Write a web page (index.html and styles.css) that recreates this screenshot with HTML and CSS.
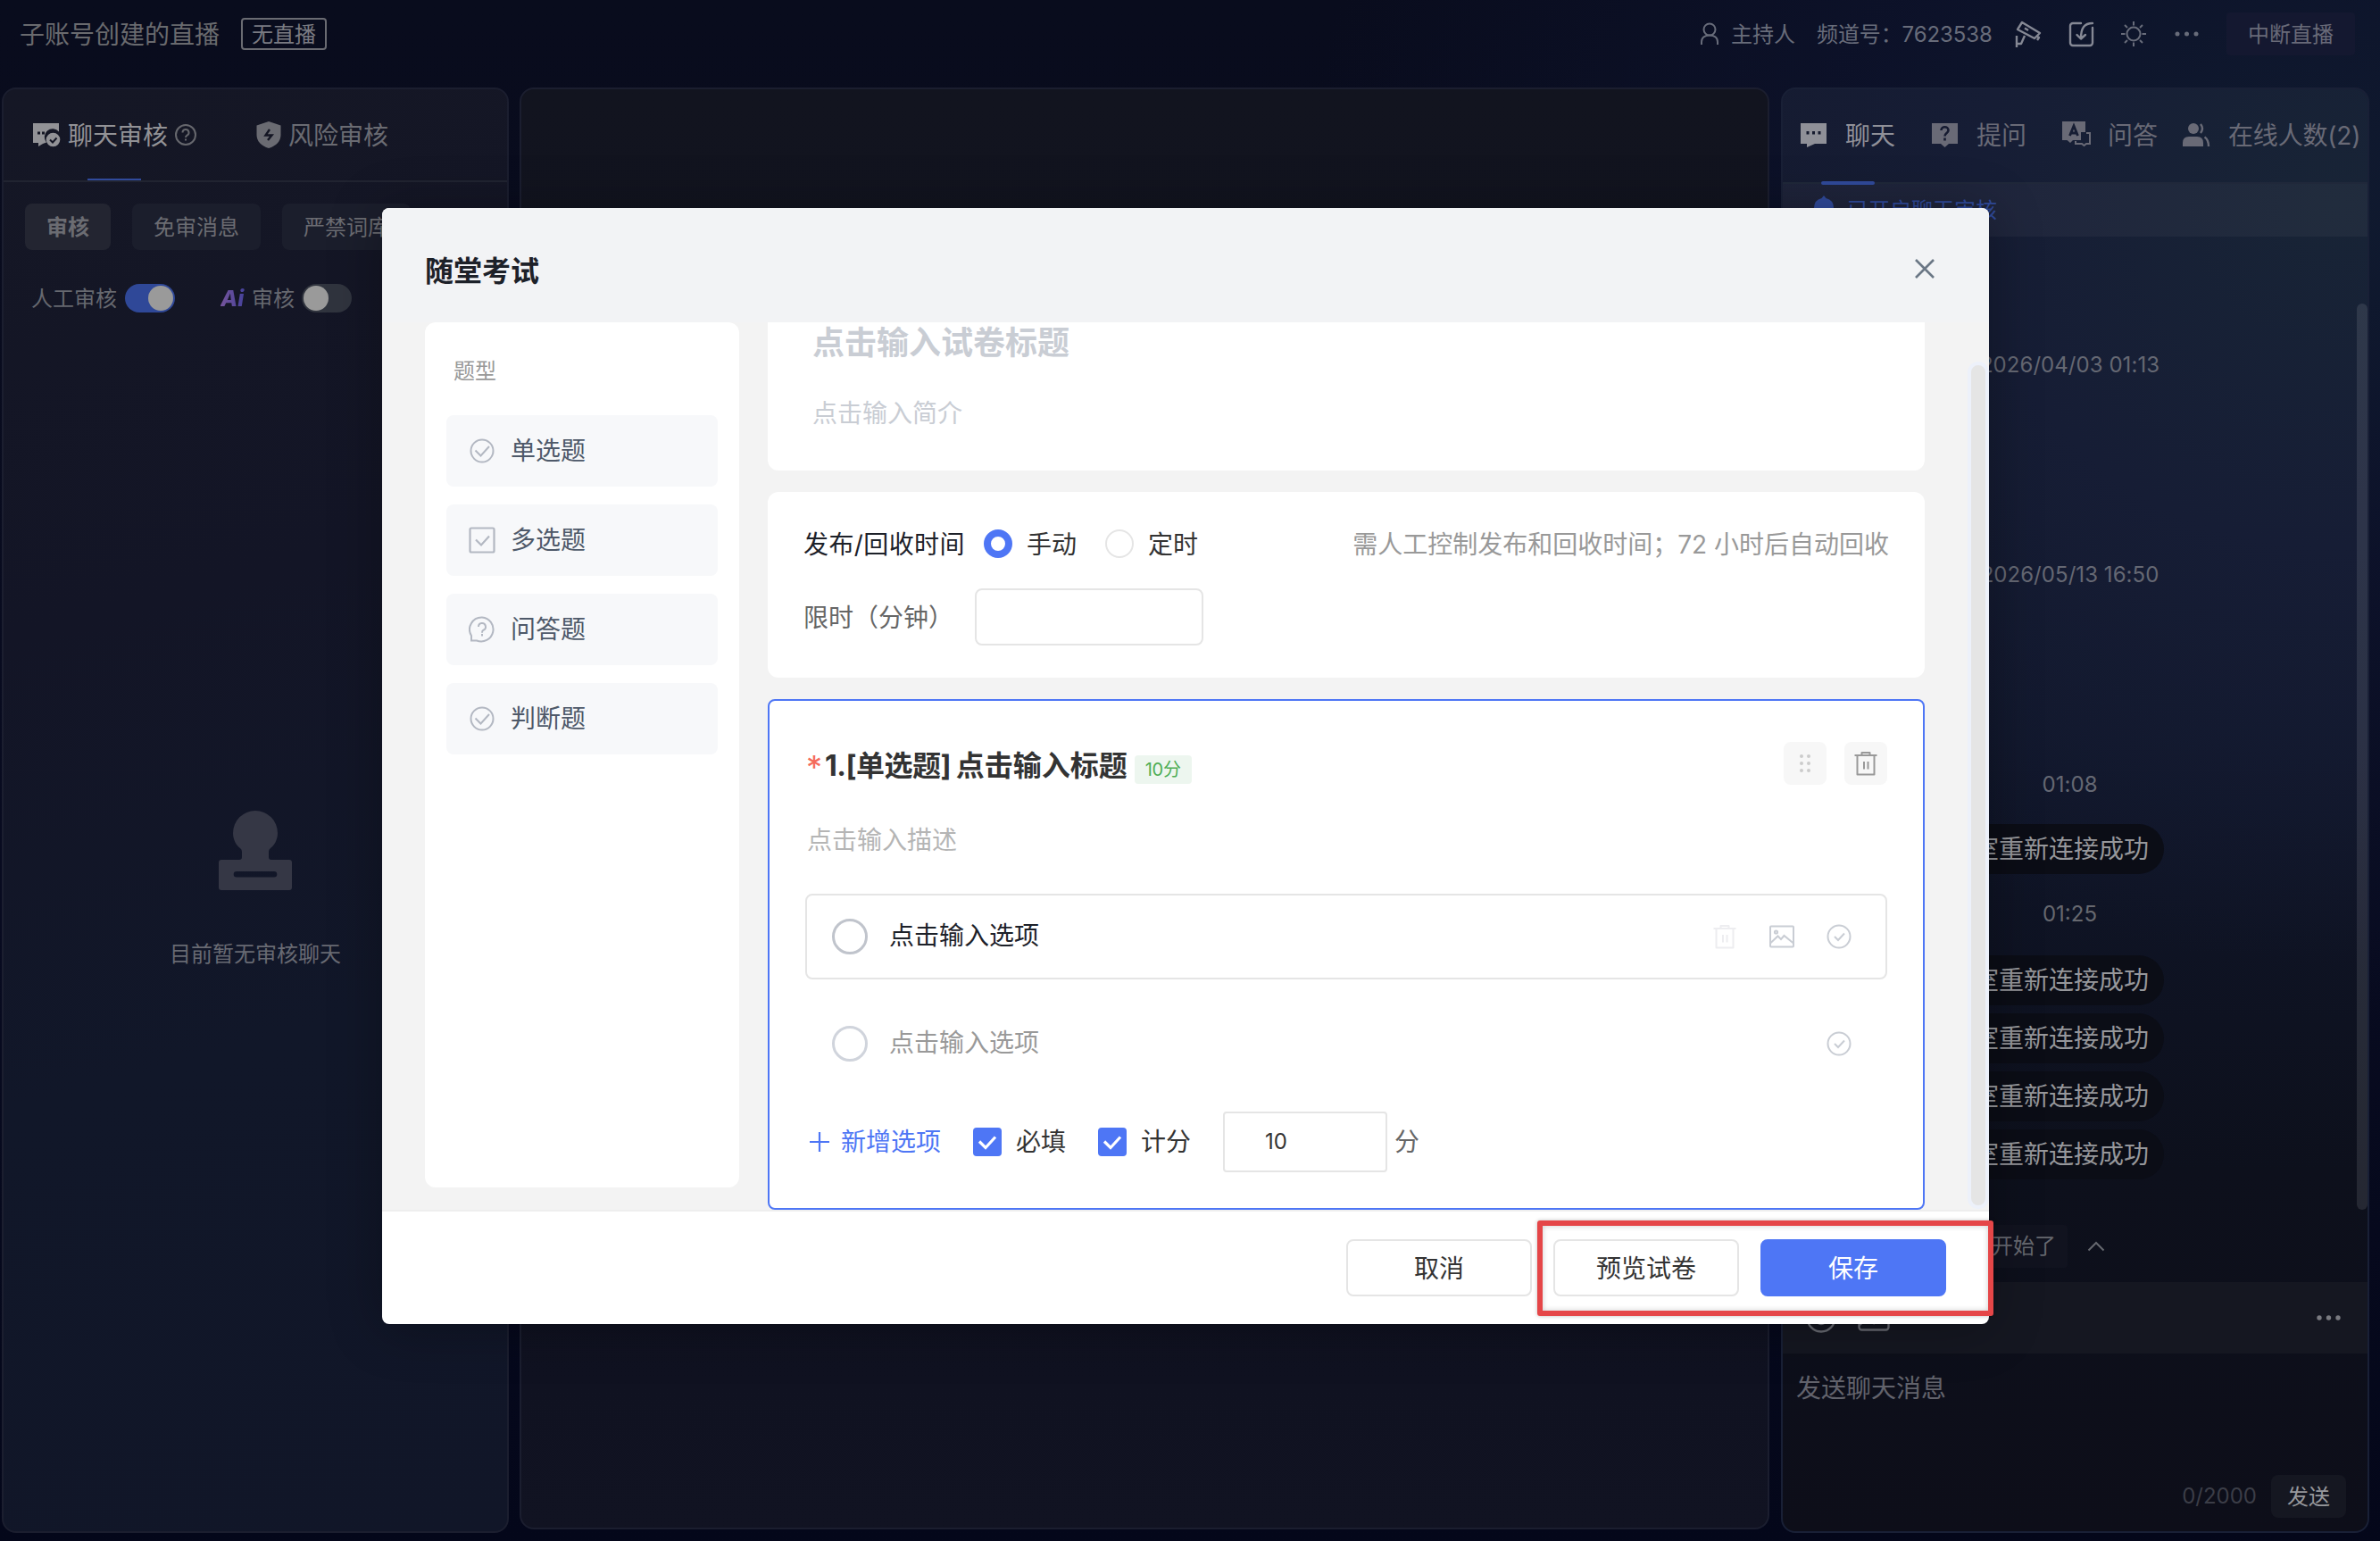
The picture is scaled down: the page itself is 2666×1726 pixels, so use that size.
FILE: index.html
```html
<!DOCTYPE html>
<html lang="zh-CN">

<head>
    <meta charset="UTF-8">
    <meta name="viewport" content="width=device-width, initial-scale=1.0">
    <title>随堂考试</title>
    <link rel="stylesheet" href="styles.css">
</head>

<body>
    <!-- shared icons -->
    <svg class="sprite" aria-hidden="true">
        <symbol id="i-check-circle" viewBox="0 0 28 28">
            <g fill="none" stroke="currentColor" stroke-width="2">
                <circle cx="14" cy="14" r="12.500" />
                <path d="M9 14l4 4 7-7.500" />
            </g>
        </symbol>
        <symbol id="i-trash" viewBox="0 0 28 28">
            <g fill="none" stroke="currentColor" stroke-width="2">
                <path d="M1.500 5h25M4.500 5v21.500h19V5M9.500 5V2h9v3M12 12v8.500M16.500 12v8.500" stroke-linejoin="round" />
            </g>
        </symbol>
        <symbol id="i-tick" viewBox="0 0 32 32">
            <path d="M7 15.500l7 7 11-12" fill="none" stroke="#fff" stroke-width="3.200" />
        </symbol>
    </svg>

    <header class="header">
        <h1 class="channel-name">子账号创建的直播</h1>
        <span class="live-status">无直播</span>
        <div class="header-right">
            <svg class="icon-user" width="22" height="26" viewBox="0 0 22 26" fill="none" stroke="currentColor" stroke-width="2">
                <circle cx="11" cy="8" r="6.500" />
                <path d="M2 25v-3c0-5 4-7.500 9-7.500s9 2.500 9 7.500v3" />
            </svg>
            <span class="role">主持人</span>
            <span class="channel-id">频道号：7623538</span>
            <svg class="icon-camera" width="32" height="32" viewBox="0 0 32 32" fill="none" stroke="currentColor" stroke-width="2.400" stroke-linejoin="round">
                <path d="M9 3l20 12-6 6L4 11zM12 9.500l4 2.500M25 18l3 2-2 3M3 18v13M3 27h5l4-9" />
            </svg>
            <svg class="icon-sign" width="30" height="30" viewBox="0 0 30 30" fill="none" stroke="currentColor" stroke-width="2.400" stroke-linecap="round" stroke-linejoin="round">
                <path d="M15 3H6a3 3 0 0 0-3 3v19a3 3 0 0 0 3 3h19a3 3 0 0 0 3-3V8M28 3c-9 0-13 5-13 17M10.500 16l4.500 4.500 5-4.500" />
            </svg>
            <svg class="icon-sun" width="30" height="30" viewBox="0 0 30 30" fill="none" stroke="currentColor" stroke-width="2">
                <circle cx="15" cy="15" r="7.500" />
                <path d="M15 1v4.500M15 24.500V29M1 15h4.500M24.500 15H29M5 5l3 3M22 22l3 3M25 5l-3 3M8 22l-3 3" />
            </svg>
            <svg class="icon-more" width="28" height="6" viewBox="0 0 28 6" fill="currentColor">
                <circle cx="3" cy="3" r="2.500" />
                <circle cx="13.500" cy="3" r="2.500" />
                <circle cx="24" cy="3" r="2.500" />
            </svg>
            <button class="btn-stop">中断直播</button>
        </div>
    </header>

    <main class="main">
        <!-- chat review -->
        <section class="panel audit-panel">
            <div class="audit-tabs">
                <div class="audit-tab active">
                    <svg width="32" height="28" viewBox="0 0 32 28">
                        <path fill="currentColor" d="M1 1h29v9.500a9 9 0 0 0-14 12L12 24l-5 3v-4H1z" />
                        <g fill="#141624">
                            <path d="M6 10.500h3v3H6zM11 10.500h3v3h-3zM16 10.500h2v2h-2z" />
                        </g>
                        <circle cx="23.500" cy="19.500" r="7.800" fill="currentColor" />
                        <path d="M20 19.500l3 3 4.500-5" fill="none" stroke="#141624" stroke-width="2" />
                    </svg>
                    <span>聊天审核</span>
                    <svg class="help" width="24" height="24" viewBox="0 0 24 24" fill="none" stroke="currentColor" stroke-width="2">
                        <circle cx="12" cy="12" r="11" />
                        <path d="M8.500 9.500a3.500 3.500 0 1 1 5 3.100c-1 .6-1.500 1-1.500 2.400M12 16.500v2" />
                    </svg>
                </div>
                <div class="audit-tab">
                    <svg width="28" height="30" viewBox="0 0 28 30">
                        <path fill="currentColor" d="M14 0l13.500 4.500V15c0 7-5 12.500-13.500 15C5.500 27.500.5 22 .5 15V4.500z" />
                        <path d="M15 9l-4.500 6.500h7L13 21" fill="none" stroke="#141624" stroke-width="2.400" />
                    </svg>
                    <span>风险审核</span>
                </div>
            </div>
            <div class="audit-filters">
                <button class="filter active">审核</button>
                <button class="filter">免审消息</button>
                <button class="filter">严禁词库</button>
            </div>
            <div class="audit-switches">
                <span>人工审核</span>
                <i class="switch on"></i>
                <em class="ai-logo">Ai</em>
                <span>审核</span>
                <i class="switch"></i>
            </div>
            <div class="audit-empty">
                <svg width="82" height="89" viewBox="0 0 82 89" fill="currentColor">
                    <path fill-rule="evenodd" d="M41 0a25 25 0 0 1 25 25c0 8-4 14-8 17q-2 1.500-2 4v6q0 3 3 3h20q3 0 3 3v28q0 3-3 3H3q-3 0-3-3V58q0-3 3-3h20q3 0 3-3v-6q0-2.500-2-4c-4-3-8-9-8-17A25 25 0 0 1 41 0zM20 68a3.300 3.300 0 0 0 0 6.600h42a3.300 3.300 0 0 0 0-6.600z" />
                </svg>
                <p>目前暂无审核聊天</p>
            </div>
        </section>

        <section class="panel stage-panel"></section>

        <!-- chat room -->
        <section class="panel chat-panel">
            <div class="chat-tabs">
                <div class="chat-tab active">
                    <svg width="32" height="30" viewBox="0 0 32 30">
                        <path fill="currentColor" d="M1 3h29v23H17l-9 4v-4H1z" />
                        <path fill="#151a2e" d="M7.500 12h3v3.500h-3zM14 12h3v3.500h-3zM20.500 12h3v3.500h-3z" />
                    </svg>
                    <span>聊天</span>
                </div>
                <div class="chat-tab">
                    <svg width="32" height="30" viewBox="0 0 32 30">
                        <path fill="currentColor" d="M1 3h29v23H20l-4.500 4-4.500-4H1z" />
                        <path d="M11.500 11c0-5 8-5 8 0 0 3-4 3-4 6.500M15.500 19.500v3" fill="none" stroke="#161b31" stroke-width="2.600" />
                    </svg>
                    <span>提问</span>
                </div>
                <div class="chat-tab">
                    <svg width="32" height="30" viewBox="0 0 32 30">
                        <path fill="currentColor" d="M0 1h26v12h-5v9h-9l-3 3-3.500-3H0z" />
                        <path d="M8.500 17l4.500-11 4.500 11M10.500 14h5" fill="none" stroke="#161d33" stroke-width="2.800" />
                        <path d="M27 14h4v12h-4l-2.500 2-2.500-2h-7v-3" fill="none" stroke="currentColor" stroke-width="2" />
                    </svg>
                    <span>问答</span>
                </div>
                <div class="chat-tab">
                    <svg width="32" height="30" viewBox="0 0 32 30" fill="currentColor">
                        <circle cx="12" cy="9" r="6" />
                        <path d="M0 29v-4q0-7 7-7h9q7 0 7 7v4z" />
                        <path d="M20 4q4 5 0 10M24.500 18.500q4.500 3 4.500 10.500" fill="none" stroke="currentColor" stroke-width="2.400" />
                    </svg>
                    <span>在线人数(2)</span>
                </div>
            </div>
            <div class="chat-notice">
                <svg width="24" height="30" viewBox="0 0 24 30" fill="currentColor">
                    <path d="M12 0l2.500 3Q23 5 23 14v9l1 2H0l1-2v-9Q1 5 9.500 3z" />
                </svg>
                <span>已开启聊天审核</span>
            </div>
            <div class="chat-body">
                <div class="chat-list">
                    <time class="chat-date">2026/04/03 01:13</time>
                    <time class="chat-date">2026/05/13 16:50</time>
                    <time class="chat-date">01:08</time>
                    <p class="chat-tip first">聊天室重新连接成功</p>
                    <time class="chat-time">01:25</time>
                    <p class="chat-tip second">聊天室重新连接成功</p>
                    <p class="chat-tip">聊天室重新连接成功</p>
                    <p class="chat-tip">聊天室重新连接成功</p>
                    <p class="chat-tip">聊天室重新连接成功</p>
                </div>
                <div class="chat-scrollbar"></div>
            </div>
            <div class="quick-reply">
                <span class="quick-tag">直播开始了</span>
                <svg width="20" height="12" viewBox="0 0 20 12" fill="none" stroke="currentColor" stroke-width="2">
                    <path d="M1.500 10.500L10 2l8.500 8.500" />
                </svg>
            </div>
            <div class="chat-toolbar">
                <svg width="34" height="34" viewBox="0 0 34 34" fill="none" stroke="currentColor" stroke-width="2.400">
                    <circle cx="17" cy="17" r="15.500" />
                    <path d="M9 19q8 10 16 0" />
                </svg>
                <svg width="36" height="30" viewBox="0 0 36 30" fill="none" stroke="currentColor" stroke-width="2.400">
                    <rect x="1.500" y="1.500" width="33" height="27" rx="3" />
                    <path d="M2 23l9-8 7 6 7-9 9 9" />
                </svg>
                <svg class="more" width="28" height="6" viewBox="0 0 28 6" fill="currentColor">
                    <circle cx="3" cy="3" r="2.700" />
                    <circle cx="13.500" cy="3" r="2.700" />
                    <circle cx="24" cy="3" r="2.700" />
                </svg>
            </div>
            <div class="chat-input">
                <p class="chat-placeholder">发送聊天消息</p>
                <div class="chat-send">
                    <span class="count">0/2000</span>
                    <button class="btn-send">发送</button>
                </div>
            </div>
        </section>
    </main>

    <!-- exam dialog -->
    <div class="dialog">
        <div class="dialog-header">
            <h2>随堂考试</h2>
            <svg width="24" height="24" viewBox="0 0 24 24" fill="none" stroke="#6b7785" stroke-width="2.600">
                <path d="M2 2l20 20M22 2L2 22" />
            </svg>
        </div>
        <div class="dialog-body">
            <aside class="types">
                <p class="types-title">题型</p>
                <div class="type-item">
                    <svg width="30" height="30" viewBox="0 0 30 30" fill="none" stroke="currentColor" stroke-width="2">
                        <circle cx="15" cy="15" r="12.500" />
                        <path d="M7.500 14.500l6 6 9.500-10.500" />
                    </svg>
                    <span>单选题</span>
                </div>
                <div class="type-item">
                    <svg width="30" height="30" viewBox="0 0 30 30" fill="none" stroke="currentColor" stroke-width="2.200">
                        <rect x="1.500" y="1.500" width="27" height="27" rx="1.500" />
                        <path d="M8 14.500l6 6 9-10" />
                    </svg>
                    <span>多选题</span>
                </div>
                <div class="type-item">
                    <svg width="30" height="30" viewBox="0 0 30 30" fill="none" stroke="currentColor" stroke-width="2">
                        <path d="M15 1.500A13.500 13.500 0 1 1 9 27.500H3V22A13.500 13.500 0 0 1 15 1.500z" />
                        <path d="M11 12a4 4 0 1 1 5.500 3.700q-1.500.8-1.500 3M15 20v2.500" />
                    </svg>
                    <span>问答题</span>
                </div>
                <div class="type-item">
                    <svg width="30" height="30" viewBox="0 0 30 30" fill="none" stroke="currentColor" stroke-width="2">
                        <circle cx="15" cy="15" r="12.500" />
                        <path d="M7.500 14.500l6 6 9.500-10.500" />
                    </svg>
                    <span>判断题</span>
                </div>
            </aside>

            <div class="paper">
                <div class="card paper-head">
                    <p class="paper-title">点击输入试卷标题</p>
                    <p class="paper-intro">点击输入简介</p>
                </div>

                <div class="card paper-setting">
                    <div class="setting-row">
                        <span class="label">发布/回收时间</span>
                        <i class="radio checked"></i>
                        <span class="radio-text">手动</span>
                        <i class="radio"></i>
                        <span class="radio-text">定时</span>
                        <span class="hint">需人工控制发布和回收时间；72 小时后自动回收</span>
                    </div>
                    <div class="setting-row limit">
                        <span class="limit-label">限时（分钟）</span>
                        <div class="limit-input"></div>
                    </div>
                </div>

                <div class="card question">
                    <div class="question-head">
                        <span class="star">*</span>
                        <h3><span class="no">1.[单选题]</span> 点击输入标题</h3>
                        <span class="score-tag">10分</span>
                        <div class="question-tools">
                            <span class="tool drag">
                                <svg width="14" height="22" viewBox="0 0 14 22" fill="currentColor">
                                    <circle cx="3" cy="3" r="2" />
                                    <circle cx="11" cy="3" r="2" />
                                    <circle cx="3" cy="11" r="2" />
                                    <circle cx="11" cy="11" r="2" />
                                    <circle cx="3" cy="19" r="2" />
                                    <circle cx="11" cy="19" r="2" />
                                </svg>
                            </span>
                            <span class="tool"><svg width="28" height="28"><use href="#i-trash" /></svg></span>
                        </div>
                    </div>
                    <p class="question-desc">点击输入描述</p>
                    <div class="option current">
                        <i class="option-radio"></i>
                        <span>点击输入选项</span>
                        <div class="option-tools">
                            <svg class="disabled" width="28" height="28"><use href="#i-trash" /></svg>
                            <svg width="28" height="28" viewBox="0 0 28 28" fill="none" stroke="currentColor" stroke-width="2">
                                <rect x="1" y="2.500" width="26" height="23" rx="1" />
                                <circle cx="7.500" cy="9" r="1.600" />
                                <path d="M1 21.500l8.500-8 3.500 3.500 3.500-4L27 21.500" />
                            </svg>
                            <svg width="28" height="28"><use href="#i-check-circle" /></svg>
                        </div>
                    </div>
                    <div class="option">
                        <i class="option-radio"></i>
                        <span>点击输入选项</span>
                        <div class="option-tools">
                            <svg width="28" height="28"><use href="#i-check-circle" /></svg>
                        </div>
                    </div>
                    <div class="question-foot">
                        <svg class="plus" width="22" height="22" viewBox="0 0 22 22" fill="none" stroke="currentColor" stroke-width="2.200">
                            <path d="M11 0v22M0 11h22" />
                        </svg>
                        <span class="add">新增选项</span>
                        <i class="checkbox"><svg width="32" height="32"><use href="#i-tick" /></svg></i>
                        <span class="check-text">必填</span>
                        <i class="checkbox"><svg width="32" height="32"><use href="#i-tick" /></svg></i>
                        <span class="check-text">计分</span>
                        <div class="score-input">10</div>
                        <span class="unit">分</span>
                    </div>
                </div>
            </div>
            <div class="paper-scrollbar"></div>
        </div>
        <div class="dialog-footer">
            <button class="btn">取消</button>
            <button class="btn">预览试卷</button>
            <button class="btn primary">保存</button>
        </div>
        <div class="mark"></div>
    </div>
</body>

</html>
```

FILE: styles.css
```css
/* General */
* {
    box-sizing: border-box;
}

body {
    margin: 0;
    width: 2666px;
    height: 1726px;
    overflow: hidden;
    position: relative;
    font-family: Inter, "Noto Sans CJK SC", sans-serif;
    font-size: 24px;
    line-height: 1.4;
    color: #66686f;
    background:
        radial-gradient(ellipse 1100px 900px at 2560px 240px, #101b30 0%, rgba(14, 20, 46, 0.7) 45%, rgba(9, 11, 28, 0) 100%),
        linear-gradient(#090c1d 0%, #080b20 60%, #04071a 100%);
}

h1, h2, h3, p {
    margin: 0;
    font-weight: 400;
}

button {
    font-family: inherit;
    padding: 0;
    border: none;
}

svg {
    display: block;
    flex-shrink: 0;
}

span {
    white-space: nowrap;
}

.sprite {
    position: absolute;
    width: 0;
    height: 0;
}

/* Header */
.header {
    display: flex;
    align-items: center;
    height: 98px;
    padding: 0 28px 22px 22px;
}

.channel-name {
    padding-top: 3px;
    font-size: 28px;
    color: #696a6e;
}

.live-status {
    margin-left: 24px;
    width: 96px;
    height: 36px;
    border: 2px solid #6a6b72;
    border-radius: 4px;
    line-height: 33px;
    text-align: center;
    color: #7a7b82;
}

.header-right {
    display: flex;
    align-items: center;
    margin-left: auto;
    color: #686c7a;
}

.icon-user {
    margin-right: 1px;
}

.role {
    margin-left: 12px;
    padding-top: 2px;
}

.channel-id {
    margin-left: 24px;
    padding-top: 2px;
    width: 196px;
    letter-spacing: -0.1px;
}

.icon-camera {
    margin-left: 25px;
    color: #858894;
}

.icon-sign {
    margin-left: 28px;
    color: #858894;
}

.icon-sun {
    margin-left: 29px;
}

.icon-more {
    margin-left: 31px;
}

.btn-stop {
    margin-left: 30px;
    width: 144px;
    height: 48px;
    padding-bottom: 4px;
    border-radius: 4px;
    font-size: 24px;
    color: #686a78;
    background: #141830;
}

/* Panels */
.main {
    display: flex;
    padding-left: 2px;
}

.panel {
    height: 1619px;
    border: 2px solid #1b1e2f;
    border-radius: 16px;
}

.audit-panel {
    width: 568px;
    background: linear-gradient(165deg, #151725 0%, #131526 35%, #111729 65%, #111628 100%);
}

.stage-panel {
    width: 1400px;
    height: 1615px;
    margin-left: 12px;
    background: linear-gradient(#12141f, #0f1120 80%, #111322);
}

.chat-panel {
    display: flex;
    flex-direction: column;
    width: 659px;
    margin-left: 13px;
    overflow: hidden;
    border-color: #192036;
    background:
        radial-gradient(ellipse 900px 850px at 620px 130px, #182436 0%, #161d35 45%, rgba(15, 20, 36, 0) 100%),
        linear-gradient(#151a2e 0%, #10162a 45%, #0d101c 75%, #0d0e19 100%);
}

/* Chat review panel */
.audit-tabs {
    display: flex;
    height: 104px;
    padding-left: 32px;
    border-bottom: 2px solid #212431;
    font-size: 28px;
}

.audit-tab {
    position: relative;
    display: flex;
    align-items: center;
    margin-right: 66px;
    color: #6a6b72;
}

.audit-tab span {
    margin-left: 8px;
    padding-top: 4px;
}

.audit-tab.active {
    margin-right: 67px;
    color: #929296;
}

.audit-tab.active::after {
    content: "";
    position: absolute;
    left: 62px;
    bottom: 0;
    width: 60px;
    height: 2px;
    background: #304a9b;
}

.audit-tab .help {
    margin-left: 8px;
    color: #66676d;
}

.audit-filters {
    display: flex;
    gap: 24px;
    padding: 24px 0 0 24px;
}

.filter {
    height: 52px;
    padding: 0 24px 4px;
    border-radius: 8px;
    font-size: 24px;
    color: #6b6c72;
    background: #1b1e2c;
}

.filter.active {
    font-weight: 700;
    background: #232531;
}

.audit-switches {
    display: flex;
    align-items: center;
    height: 32px;
    margin: 38px 0 0 31px;
}

.audit-switches span {
    padding-top: 2px;
}

.switch {
    display: flex;
    width: 56px;
    height: 32px;
    margin-left: 8px;
    padding: 2px;
    border-radius: 16px;
    background: #30343e;
}

.switch::before {
    content: "";
    width: 28px;
    height: 28px;
    border-radius: 50%;
    background: #9a9a9a;
}

.switch.on {
    margin-left: 9px;
    justify-content: flex-end;
    background: #2f4898;
}

.ai-logo {
    margin: 0 8px 0 51px;
    width: 27px;
    font-size: 25px;
    line-height: 32px;
    font-weight: 800;
    color: transparent;
    background: linear-gradient(90deg, #75549b, #45419b);
    -webkit-background-clip: text;
    background-clip: text;
}

.audit-empty {
    display: flex;
    flex-direction: column;
    align-items: center;
    margin-top: 558px;
    color: #353745;
}

.audit-empty p {
    margin-top: 55px;
    color: #686a73;
}

/* Chat room panel */
.chat-tabs {
    display: flex;
    flex-shrink: 0;
    height: 106px;
    padding-left: 19px;
    border-bottom: 2px solid #20283a;
    font-size: 28px;
    color: #696a76;
}

.chat-tab {
    position: relative;
    display: flex;
    align-items: center;
    gap: 19px;
    margin-right: 40px;
}

.chat-tab svg {
    margin-bottom: 5px;
}

.chat-tab span {
    padding-top: 1px;
}

.chat-tab:nth-child(3) {
    margin-right: 28px;
}

.chat-tab:last-child {
    margin-right: 0;
    letter-spacing: -0.2px;
}

.chat-tab.active {
    color: #8f9098;
}

.chat-tab.active::after {
    content: "";
    position: absolute;
    left: 24px;
    bottom: -3px;
    width: 60px;
    height: 4px;
    border-radius: 2px;
    background: #304a9b;
}

.chat-notice {
    display: flex;
    flex-shrink: 0;
    align-items: center;
    gap: 14px;
    height: 59px;
    padding-left: 34px;
    color: #304a9b;
    background: rgba(255, 255, 255, 0.04);
}

.chat-notice svg {
    margin-bottom: 3px;
}

.chat-body {
    display: flex;
    height: 1107px;
    flex-shrink: 0;
}

.chat-list {
    display: flex;
    flex: 1;
    flex-direction: column;
    align-items: center;
    padding-top: 128px;
}

.chat-date {
    height: 32px;
    line-height: 32px;
    margin-bottom: 203px;
    letter-spacing: 0.05px;
    color: #656873;
}

.chat-time {
    height: 32px;
    line-height: 32px;
    margin: 29px 0 30px;
}

.chat-tip {
    align-self: flex-end;
    height: 56px;
    margin: 9px 216px 0 0;
    padding: 0 17px;
    border-radius: 28px;
    font-size: 28px;
    line-height: 56px;
    color: #96979b;
    background: #0b0d16;
}

.chat-tip.first {
    margin-top: -175px;
}

.chat-tip.second {
    margin-top: 0;
}

.chat-scrollbar {
    width: 12px;
    height: 1015px;
    margin-top: 75px;
    border-radius: 6px;
    background: rgba(255, 255, 255, 0.1);
}

.quick-reply {
    display: flex;
    flex-shrink: 0;
    align-items: center;
    height: 48px;
    padding-left: 170px;
}

.quick-tag {
    width: 149px;
    height: 48px;
    margin-right: 22px;
    border-radius: 4px;
    padding-left: 3px;
    line-height: 48px;
    text-align: center;
    background: #11131f;
}

.chat-toolbar {
    display: flex;
    flex-shrink: 0;
    align-items: center;
    gap: 24px;
    height: 80px;
    margin-top: 16px;
    padding: 0 29px 0 26px;
    color: #686a72;
    background: #151721;
}

.chat-toolbar .more {
    margin-left: auto;
    color: #797a80;
}

.chat-input {
    display: flex;
    flex: 1;
    flex-direction: column;
    justify-content: space-between;
    padding: 20px 24px 15px 15px;
}

.chat-placeholder {
    font-size: 28px;
    color: #62636c;
}

.chat-send {
    display: flex;
    align-items: center;
    justify-content: flex-end;
}

.count {
    margin-right: 16px;
    color: #3b3d47;
}

.btn-send {
    width: 84px;
    height: 48px;
    padding-bottom: 4px;
    border-radius: 8px;
    font-size: 24px;
    color: #97989c;
    background: #151721;
}

/* Dialog */
.dialog {
    position: absolute;
    left: 428px;
    top: 233px;
    display: flex;
    flex-direction: column;
    width: 1800px;
    height: 1250px;
    border-radius: 8px;
    background: #fff;
    box-shadow: 0 4px 60px rgba(0, 0, 0, 0.3);
}

.dialog-header {
    display: flex;
    align-items: center;
    justify-content: space-between;
    height: 128px;
    padding: 15px 60px 0 48px;
    border-radius: 8px 8px 0 0;
    background: #f2f3f5;
}

.dialog-header h2 {
    font-size: 32px;
    font-weight: 700;
    color: #1d2129;
}

.dialog-header svg {
    margin-bottom: 7px;
}

.dialog-body {
    display: flex;
    height: 996px;
    padding-left: 48px;
    border-bottom: 2px solid #eee;
    background: #f3f3f3;
}

.types {
    width: 352px;
    height: 969px;
    padding: 38px 24px 0;
    border-radius: 12px;
    background: #fff;
}

.types-title {
    height: 66px;
    padding-left: 8px;
    color: #999;
}

.type-item {
    display: flex;
    align-items: center;
    gap: 17px;
    height: 80px;
    margin-bottom: 20px;
    padding-left: 25px;
    border-radius: 8px;
    font-size: 28px;
    color: #4e5969;
    background: #f7f8fa;
}

.type-item span {
    padding-top: 1px;
}

.type-item svg {
    color: #b3b8c2;
}

.paper {
    width: 1296px;
    margin-left: 32px;
}

.card {
    margin-bottom: 24px;
    border-radius: 12px;
    background: #fff;
}

.paper-head {
    height: 166px;
    padding: 1px 0 0 50px;
    border-radius: 0 0 12px 12px;
    color: #c9cdd4;
}

.paper-title {
    font-size: 36px;
    line-height: 44px;
    font-weight: 700;
}

.paper-intro {
    padding-top: 37px;
    font-size: 28px;
    line-height: 40px;
}

.paper-setting {
    height: 208px;
    padding: 34px 40px 0;
    font-size: 28px;
}

.setting-row {
    display: flex;
    align-items: center;
    height: 48px;
}

.setting-row span {
    padding-top: 3px;
}

.label {
    width: 182px;
    letter-spacing: 0.4px;
    color: #1d2129;
}

.radio {
    width: 32px;
    height: 32px;
    margin-left: 20px;
    border: 2px solid #e5e5e5;
    border-radius: 50%;
}

.radio.checked {
    border: 8px solid #4e76f5;
}

.radio-text {
    margin-left: 16px;
    color: #333;
}

.radio-text + .radio {
    margin-left: 32px;
}

.hint {
    margin-left: auto;
    color: #999;
}

.limit {
    height: 64px;
    margin-top: 26px;
    color: #666;
}

.limit-label {
    width: 192px;
}

.limit-input {
    width: 256px;
    height: 64px;
    border: 2px solid #e5e5e5;
    border-radius: 8px;
}

.question {
    height: 572px;
    margin-bottom: 0;
    padding: 46px 40px 0;
    border: 2px solid #4e76f5;
    border-radius: 8px;
}

.question-head {
    display: flex;
    align-items: center;
    height: 48px;
}

.star {
    width: 22px;
    padding: 8px 0 0 1px;
    font-size: 36px;
    color: #f56c5c;
}

.question-head h3 {
    padding-top: 6px;
    font-size: 32px;
    font-weight: 700;
    word-spacing: -2px;
    color: #333;
}

.question-head .no {
    letter-spacing: -0.5px;
}

.score-tag {
    width: 64px;
    height: 32px;
    margin: 13px 0 0 8px;
    border-radius: 4px;
    font-size: 20px;
    line-height: 32px;
    text-align: center;
    letter-spacing: -0.3px;
    color: #4fae55;
    background: #edf6ef;
}

.question-tools {
    display: flex;
    gap: 20px;
    margin-left: auto;
}

.tool {
    display: flex;
    align-items: center;
    justify-content: center;
    width: 48px;
    height: 48px;
    border-radius: 8px;
    color: #999;
    background: #f7f7f7;
}

.tool.drag {
    color: #ccc;
}

.question-desc {
    margin-top: 42px;
    padding-left: 2px;
    font-size: 28px;
    line-height: 40px;
    color: #b5b5b5;
}

.option {
    display: flex;
    align-items: center;
    height: 96px;
    margin-top: 24px;
    padding: 0 38px 0 28px;
    border: 2px solid transparent;
    border-radius: 8px;
    font-size: 28px;
    color: #999;
}

.option.current {
    margin-top: 40px;
    color: #1d2129;
    border-color: #e5e5e5;
}

.option-radio {
    width: 40px;
    height: 40px;
    margin-right: 24px;
    border: 3px solid #d0d4dc;
    border-radius: 50%;
}

.option.current .option-radio {
    border-color: #c0c4cc;
}

.option-tools {
    display: flex;
    gap: 36px;
    margin-left: auto;
    color: #c9cdd4;
}

.option-tools .disabled {
    color: #ededf0;
}

.question-foot {
    display: flex;
    align-items: center;
    height: 68px;
    margin-top: 28px;
    padding-left: 5px;
    font-size: 28px;
    color: #333;
}

.plus,
.add {
    color: #4e76f5;
}

.add {
    margin-left: 13px;
}

.question-foot span {
    padding-top: 1px;
}

.checkbox {
    width: 32px;
    height: 32px;
    margin-left: 36px;
    border-radius: 4px;
    background: #4e76f5;
}

.check-text {
    margin-left: 16px;
}

.score-input {
    width: 184px;
    height: 68px;
    margin-left: 36px;
    padding-left: 45px;
    border: 2px solid #e5e5e5;
    border-radius: 4px;
    font-size: 24px;
    line-height: 64px;
}

.unit {
    margin-left: 8px;
    color: #666;
}

.paper-scrollbar {
    width: 24px;
    height: 949px;
    margin: 44px 0 0 auto;
    border: 4px solid #edf1fa;
    border-radius: 12px;
    background: #e5e5e5;
}

.dialog-footer {
    display: flex;
    gap: 24px;
    justify-content: flex-end;
    padding: 31px 48px 0 0;
}

.btn {
    width: 208px;
    height: 64px;
    padding-bottom: 3px;
    border: 2px solid #e5e5e5;
    border-radius: 8px;
    font-size: 28px;
    color: #333;
    background: #fff;
}

.btn.primary {
    border-color: #4e76f5;
    color: #fff;
    background: #4e76f5;
}

/* red frame over preview / save */
.mark {
    position: absolute;
    left: 1294px;
    top: 1134px;
    width: 511px;
    height: 107px;
    border: 6px solid #e54648;
    border-radius: 3px;
    box-shadow: 0 0 4px rgba(0, 0, 0, 0.25), inset 0 0 6px rgba(0, 0, 0, 0.2);
}
```
